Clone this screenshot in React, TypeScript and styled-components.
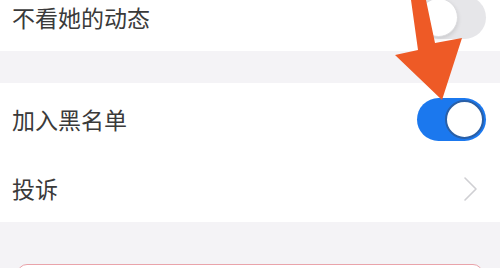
import React from 'react';
import styled, { createGlobalStyle } from 'styled-components';

const GlobalStyle = createGlobalStyle`
  html, body {
    margin: 0;
    padding: 0;
    background: #f4f3f6;
    overflow: hidden;
  }
  body {
    font-family: "Noto Sans CJK SC", "Noto Sans", sans-serif;
  }
`;

const Screen = styled.div`
  position: relative;
  width: 500px;
  height: 268px;
  overflow: hidden;
  background: #f4f3f6;
`;

// list is scrolled a bit, so the first row is cut by the top edge
const List = styled.div`
  display: flex;
  flex-direction: column;
  margin-top: -17px;
`;

const Section = styled.div<{ $gap: number }>`
  display: flex;
  flex-direction: column;
  background: #ffffff;
  margin-bottom: ${(p) => p.$gap}px;
`;

const Row = styled.div<{ $height: number }>`
  display: flex;
  align-items: center;
  justify-content: space-between;
  height: ${(p) => p.$height}px;
  padding: 0 14px 0 12px;
`;

const Label = styled.span`
  font-size: 23px;
  line-height: 1;
  color: #3a3a3a;
  letter-spacing: 0;
`;

const Track = styled.div<{ $on: boolean }>`
  display: flex;
  align-items: center;
  justify-content: ${(p) => (p.$on ? 'flex-end' : 'flex-start')};
  width: 69px;
  height: 43px;
  padding: 2px;
  box-sizing: border-box;
  border-radius: 22px;
  background: ${(p) => (p.$on ? '#1b78ee' : '#e6e6e9')};
`;

const Knob = styled.div<{ $on: boolean }>`
  width: 39px;
  height: 39px;
  box-sizing: border-box;
  border-radius: 50%;
  background: #ffffff;
  border: ${(p) => (p.$on ? '2px solid #2a5fa6' : '1px solid #dcdcdf')};
  box-shadow: ${(p) => (p.$on ? 'none' : '0 2px 4px rgba(0,0,0,0.12)')};
`;

const Chevron = styled.svg`
  width: 15px;
  height: 26px;
  margin-right: 8px;
`;

const DangerButton = styled.div`
  height: 50px;
  margin: 0 17px;
  border: 1.5px solid #e9a3aa;
  border-radius: 10px;
  background: #ffffff;
`;

const Arrow = styled.svg`
  position: absolute;
  left: 0;
  top: 0;
  pointer-events: none;
`;

const Toggle = ({ on }: { on: boolean }) => (
  <Track $on={on}>
    <Knob $on={on} />
  </Track>
);

export default function App() {
  return (
    <Screen>
      <GlobalStyle />
      <List>
        <Section $gap={32}>
          <Row $height={68}>
            <Label>不看她的动态</Label>
            <Toggle on={false} />
          </Row>
        </Section>
        <Section $gap={42}>
          <Row $height={72}>
            <Label>加入黑名单</Label>
            <Toggle on />
          </Row>
          <Row $height={67}>
            <Label>投诉</Label>
            <Chevron viewBox="0 0 15 26">
              <path d="M2 2 L13 13 L2 24" fill="none" stroke="#cfcfd3" strokeWidth="1.6" strokeLinecap="round" strokeLinejoin="round" />
            </Chevron>
          </Row>
        </Section>
        <DangerButton />
      </List>
      <Arrow width="500" height="268" viewBox="0 0 500 268">
        <polygon
          points="411,0 426,0 435,43 462,38 442,100 395,55 418,50 411,0"
          fill="#ee5a26"
        />
      </Arrow>
    </Screen>
  );
}
